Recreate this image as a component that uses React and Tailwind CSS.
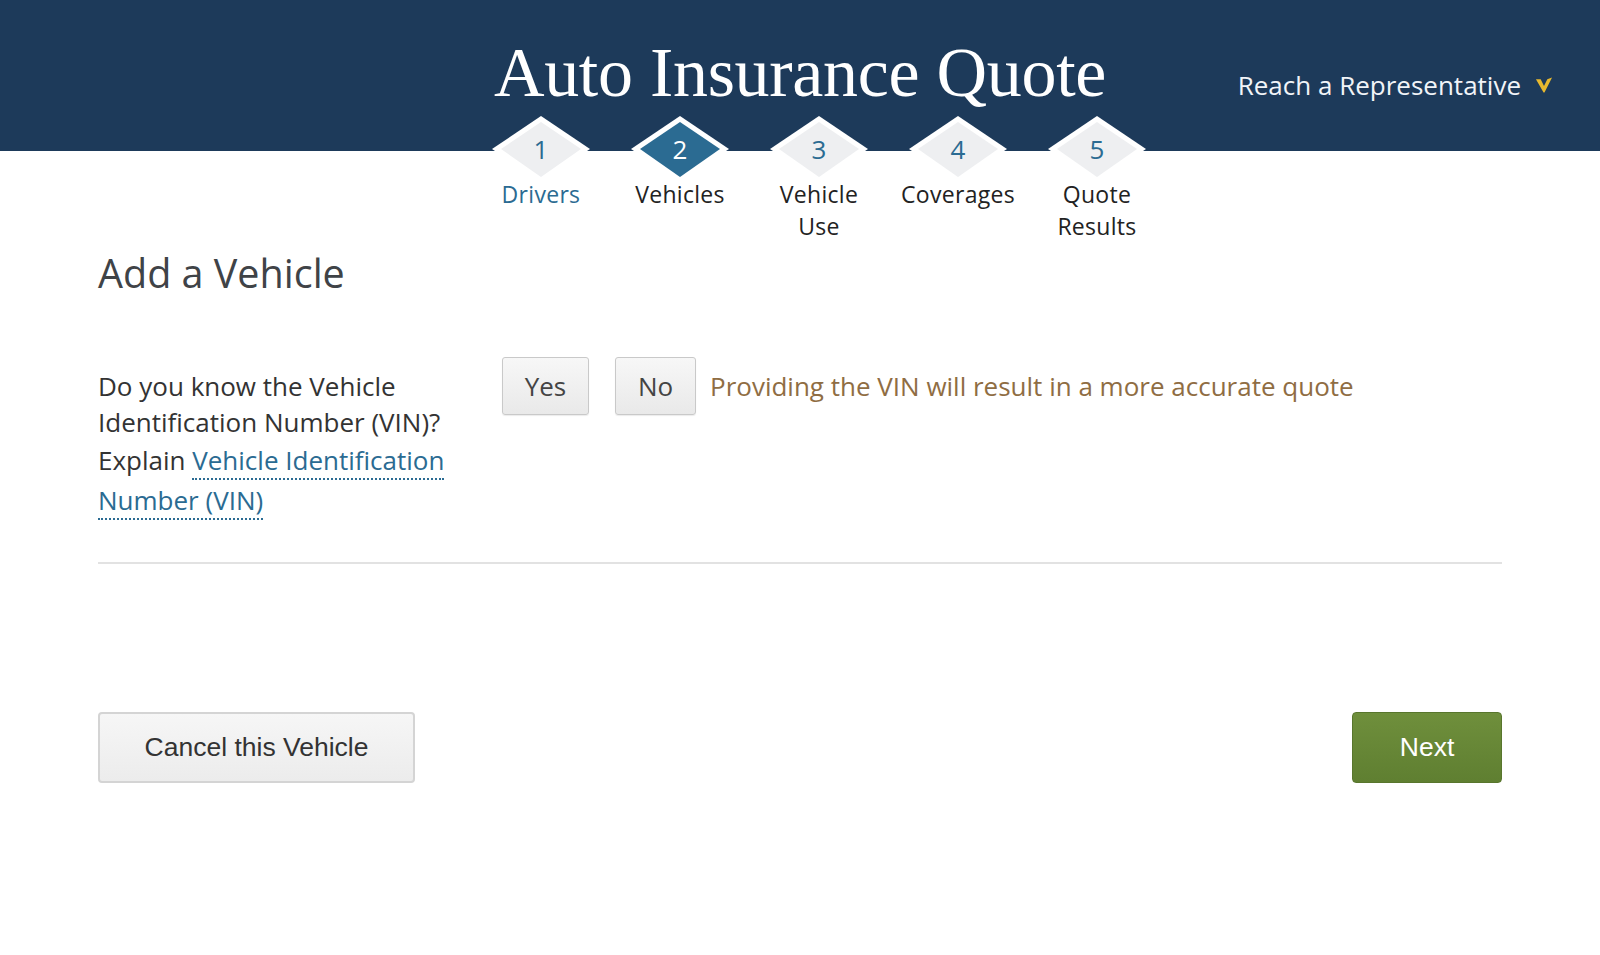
import React from 'react';

const steps = [
    { n: 1, label: ['Drivers'], state: 'done' },
    { n: 2, label: ['Vehicles'], state: 'active' },
    { n: 3, label: ['Vehicle', 'Use'], state: 'todo' },
    { n: 4, label: ['Coverages'], state: 'todo' },
    { n: 5, label: ['Quote', 'Results'], state: 'todo' },
];

const Diamond = ({ n, active }) => (
    <div className="relative w-[100px] h-[68px] flex items-center justify-center">
        <svg className="absolute inset-0" width="100" height="68" viewBox="0 0 100 68">
            <polygon points="50,1 99,34 50,67 1,34" fill="#ffffff" />
            <polygon points="50,7 90,34 50,62 10,34" fill={active ? '#2b6b92' : '#eeeff1'} />
        </svg>
        <span className={`relative text-[26px] leading-none ${active ? 'text-white' : 'text-[#2b6b92]'}`}>{n}</span>
    </div>
);

const App = () => {
    return (
        <div className="min-h-screen bg-white font-['Open_Sans','Lato',sans-serif]">
            {/* Header */}
            <div className="h-[151px] bg-[#1d3a5a] grid grid-cols-[1fr_auto_1fr]">
                <div></div>
                <h1 className="pt-[38px] font-['Liberation_Serif',serif] text-[70px] leading-[70px] text-white tracking-[-0.3px]">
                    Auto Insurance Quote
                </h1>
                <div className="flex justify-end items-start pt-[67px] pr-[47px]">
                    <a className="flex items-center gap-[14px] text-[26px] leading-[36px] text-[#f1f4f8]">
                        Reach a Representative
                        <svg width="18" height="18" viewBox="0 0 19 18">
                            <polygon points="1,3 6,3 9.5,10 13,3 18,1 10,17 9,17" fill="#e8b92f" />
                        </svg>
                    </a>
                </div>
            </div>

            {/* Steps */}
            <div className="flex justify-center -mt-[36px] ml-[38px]">
                {steps.map((s) => (
                    <div key={s.n} className="w-[139px] flex flex-col items-center">
                        <Diamond n={s.n} active={s.state === 'active'} />
                        <div className={`-mt-[5px] text-center text-[23px] leading-[32px] tracking-[0.3px] ${s.state === 'done' ? 'text-[#2b6b92]' : 'text-[#222]'}`}>
                            {s.label.map((l) => (
                                <div key={l}>{l}</div>
                            ))}
                        </div>
                    </div>
                ))}
            </div>

            <div className="px-[98px]">
                <h2 className="mt-[9px] text-[39.5px] leading-[44px] text-[#3f4347]">Add a Vehicle</h2>

                <div className="mt-[73px] flex items-start">
                    <div className="w-[370px] text-[26px] leading-[36px] text-[#333]">
                        <p>Do you know the Vehicle Identification Number (VIN)?</p>
                        <p className="leading-[40px]">
                            Explain{' '}
                            <a className="text-[#2b6b92] border-b-2 border-dotted border-[#2b6b92]">Vehicle Identification Number (VIN)</a>
                        </p>
                    </div>
                    <div className="ml-[34px] -mt-[11px] flex items-center">
                        <button className="w-[87px] h-[58px] rounded-[3px] border border-[#c9c9c9] bg-gradient-to-b from-[#f7f7f7] to-[#e9e9e9] text-[26px] text-[#444] shadow-[0_1px_1px_rgba(0,0,0,0.08)]">Yes</button>
                        <button className="ml-[26px] w-[81px] h-[58px] rounded-[3px] border border-[#c9c9c9] bg-gradient-to-b from-[#f7f7f7] to-[#e9e9e9] text-[26px] text-[#444] shadow-[0_1px_1px_rgba(0,0,0,0.08)]">No</button>
                        <span className="ml-[14px] text-[26px] text-[#8f6d43]">Providing the VIN will result in a more accurate quote</span>
                    </div>
                </div>

                <div className="mt-[42px] h-[2px] bg-[#e2e2e2]"></div>

                <div className="mt-[148px] flex justify-between">
                    <button className="w-[317px] h-[71px] rounded-[4px] border-2 border-[#d4d4d4] bg-gradient-to-b from-[#f6f6f6] to-[#ececec] font-['Liberation_Sans',Arial,sans-serif] text-[26.5px] text-[#333]">
                        Cancel this Vehicle
                    </button>
                    <button className="w-[150px] h-[71px] rounded-[4px] bg-gradient-to-b from-[#6f8f3c] to-[#5f7f31] border border-[#58762d] font-['Liberation_Sans',Arial,sans-serif] text-[26.5px] text-white">
                        Next
                    </button>
                </div>
            </div>
        </div>
    );
};

export default App;
